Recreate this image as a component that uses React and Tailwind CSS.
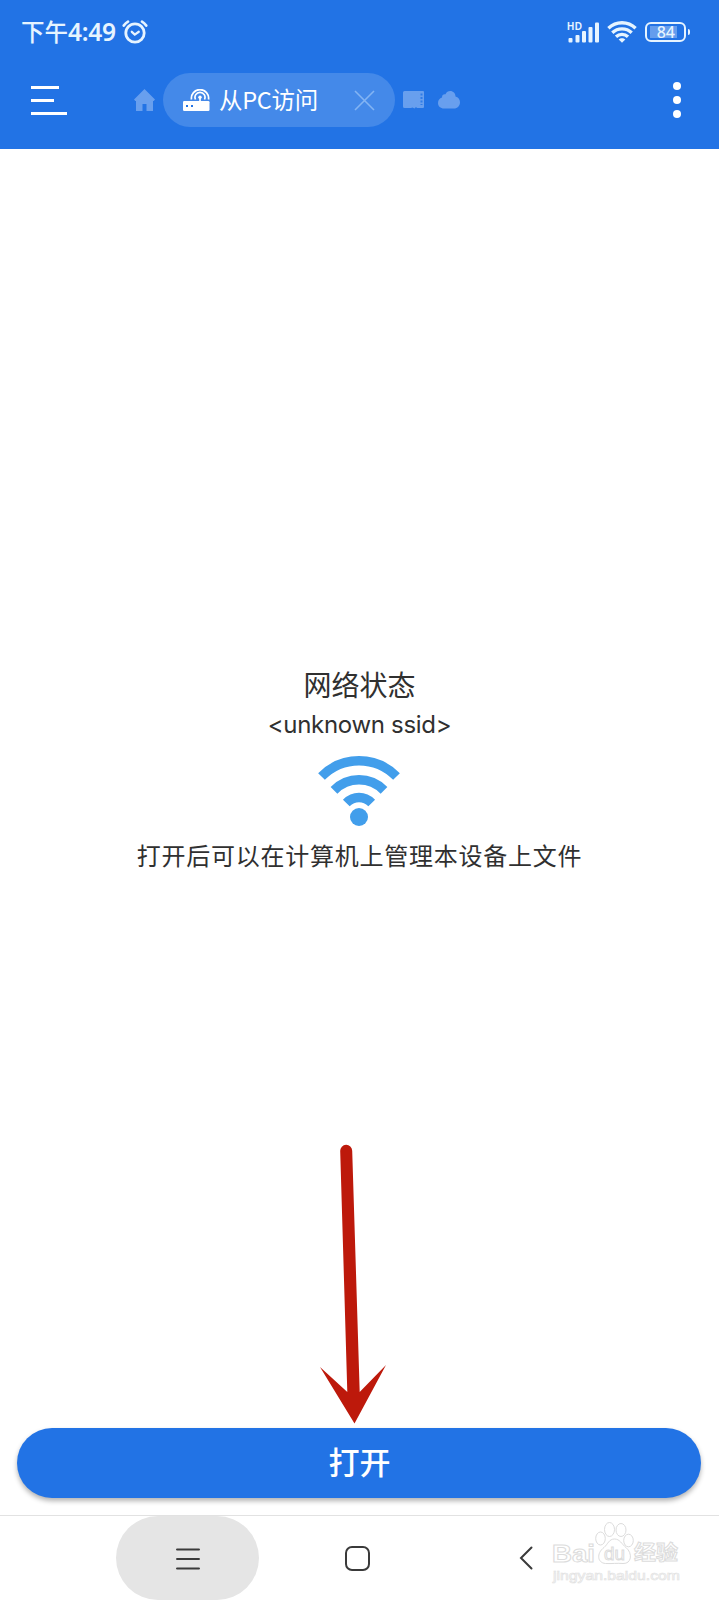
import React from 'react';

const CJK = "font-['Noto_Sans_CJK_SC',sans-serif]";

function AlarmIcon() {
  return (
    <svg width="26" height="24" viewBox="0 0 26 24" fill="none" stroke="currentColor" strokeLinecap="round">
      <circle cx="13" cy="13" r="9.2" strokeWidth="2.8" />
      <path d="M9.8 11.8l3 2.8 4-2.8" strokeWidth="2.3" />
      <path d="M1.8 5.6C2.9 3.9 4.2 2.6 6 1.6M24.2 5.6c-1.1-1.7-2.4-3-4.2-4" strokeWidth="2.7" />
    </svg>
  );
}

function SignalIcon() {
  return (
    <svg width="33" height="22" viewBox="0 0 33 22" fill="currentColor">
      <text x="0" y="8.5" fontSize="10" fontWeight="600" fontFamily="'Liberation Sans', Arial, sans-serif" textLength="15">HD</text>
      <rect x="1.5" y="17" width="4" height="4.5" rx="1" />
      <rect x="8.5" y="14" width="4" height="7.5" rx="1" />
      <rect x="15" y="10" width="4" height="11.5" rx="1" />
      <rect x="21.5" y="6" width="4" height="15.5" rx="1" />
      <rect x="28" y="1.5" width="4" height="20" rx="1" />
    </svg>
  );
}

function StatusWifi() {
  return (
    <svg width="30" height="22" viewBox="0 0 30 22" fill="none" stroke="currentColor" strokeWidth="3.3">
      <path d="M1.4 7.3C9-0.1 21-0.1 28.6 7.3" />
      <path d="M5.3 11.7c5.4-5.2 14-5.2 19.4 0" />
      <path d="M9 15.7c3.4-3.2 8.6-3.2 12 0" />
      <path d="M11.7 18.6c1.8-1.9 4.8-1.9 6.6 0L15 21.8z" fill="currentColor" stroke="none" />
    </svg>
  );
}

function Battery() {
  return (
    <div className="ml-px flex items-center gap-[2px]">
      <div className="flex h-5 w-[41px] items-center rounded-[6px] border-2 border-current pl-[3px]">
        <div className="flex h-[12px] w-[27px] items-center justify-end bg-white/30">
          <span className="pr-[2px] font-['Noto_Sans',sans-serif] text-[16px] leading-none font-medium">84</span>
        </div>
      </div>
      <div className="h-[6px] w-[2px] rounded-r-sm bg-current" />
    </div>
  );
}

function RouterIcon() {
  return (
    <svg width="27" height="22" viewBox="0 0 27 22" fill="none" stroke="currentColor">
      <rect x="0" y="12" width="26.5" height="10" rx="1.2" fill="currentColor" stroke="none" />
      <rect x="3" y="16" width="2" height="2" fill="#2474e5" stroke="none" />
      <rect x="8" y="16" width="2" height="2" fill="#2474e5" stroke="none" />
      <path d="M17 8.5v4" strokeWidth="1.7" />
      <circle cx="17" cy="8.3" r="1.7" fill="currentColor" stroke="none" />
      <path d="M12.5 10.5a5 5 0 1 1 9 0M8.5 10.5a8.6 8.6 0 1 1 17 0" strokeWidth="1.7" />
    </svg>
  );
}

function BigWifi() {
  return (
    <svg className="-ml-[2px]" width="82" height="70" viewBox="0 0 82 70" fill="none" stroke="#429eeb" strokeWidth="9.5">
      <path d="M3.5 20.5C24.5-.5 57.5-.5 78.5 20.5" />
      <path d="M16 34.3c14-14 36-14 50 0" />
      <path d="M28.3 47c7.4-7.4 18-7.4 25.4 0" />
      <circle cx="41" cy="61" r="9" fill="#429eeb" stroke="none" />
    </svg>
  );
}

function Header() {
  return (
    <header className="h-[149px] bg-[#2273e5]">
      <div className="flex h-16 items-center pl-[21px] pr-[29px] text-[#e6f4ff]">
        <span className={`${CJK} text-[23.5px] leading-none font-medium`}>下午</span>
        <span className="mr-[6px] w-[48px] whitespace-nowrap font-['Noto_Sans',sans-serif] text-[24.5px] leading-none font-semibold tracking-[-0.3px]">4:49</span>
        <AlarmIcon />
        <div className="ml-auto flex items-center gap-[7px]">
          <SignalIcon />
          <StatusWifi />
          <Battery />
        </div>
      </div>

      <div className="flex h-[72px] items-center pl-[31px] text-white">
        <div className="mr-[67px] flex w-9 flex-col gap-[10px] pt-px">
          <div className="h-[3px] w-[28px] bg-white" />
          <div className="h-[3px] w-[23px] bg-white" />
          <div className="h-[3px] w-9 bg-white" />
        </div>
        <svg className="mr-[8px] shrink-0 text-[#689fee]" width="21" height="22" viewBox="0 0 21 22" fill="currentColor">
          <path d="M10.5 0L21 10.5l-1.3 1.5H19v10h-6.5v-7h-4v7H2V12h-.7L0 10.5 10.5 0z" />
        </svg>
        <div className="flex h-[54px] w-[232px] items-center rounded-full bg-[#4489e9] px-5">
          <RouterIcon />
          <span className={`${CJK} ml-[9px] text-[23.5px] leading-none tracking-[-0.3px] whitespace-nowrap`}>从PC访问</span>
          <svg className="ml-auto text-[#83b4f3]" width="21" height="21" viewBox="0 0 21 21" fill="none" stroke="currentColor" strokeWidth="1.6">
            <path d="M1 1l19 19M20 1L1 20" />
          </svg>
        </div>
        <svg className="ml-[8px] text-[#689fee]" width="21" height="18" viewBox="0 0 21 18" fill="currentColor">
          <path d="M1.500 0H20a1 1 0 0 1 1 1v15a1 1 0 0 1-1 1h-6l-1-1-1.500 1.500-2-1L8 17H1.500A1.500 1.500 0 0 1 0 15.500v-14A1.500 1.500 0 0 1 1.500 0z" />
          <path d="M18.500 2.500V14" stroke="#2f7ce7" strokeWidth="2" strokeDasharray="2 1.500" />
        </svg>
        <svg className="ml-[14px] text-[#689fee]" width="22" height="18" viewBox="0 0 22 18" fill="currentColor">
          <path d="M6 17.5c-3.5 0-6-2.300-6-5.500 0-2.700 1.700-4.800 4-5.500C4 3.800 5.500 3 7.500 3.300 8.500 1 10 0 12.200 0c3 0 5.300 2.300 5.300 5.500 2.700.7 4.500 3 4.500 5.700 0 3.600-2.600 6.300-6 6.300z" />
        </svg>
        <div className="ml-auto mr-[38px] flex flex-col gap-[6px]">
          <div className="size-2 rounded-full bg-white" />
          <div className="size-2 rounded-full bg-white" />
          <div className="size-2 rounded-full bg-white" />
        </div>
      </div>
    </header>
  );
}

function NetworkStatus() {
  return (
    <div className="flex flex-col items-center pt-[515px] text-[#303030]">
      <p className={`${CJK} h-10 text-[28px] leading-10`}>网络状态</p>
      <p className="mt-px mb-[12px] h-[39px] font-['Inter',sans-serif] text-[24px] leading-[39px] tracking-[-0.3px]">&lt;unknown ssid&gt;</p>
      <BigWifi />
      <p className={`${CJK} mt-[9px] h-10 text-[24px] leading-10 tracking-[0.75px]`}>打开后可以在计算机上管理本设备上文件</p>
    </div>
  );
}

function Pointer() {
  return (
    <svg className="absolute top-[1130px] left-[300px]" width="110" height="300" viewBox="0 0 110 300" fill="#bd190b">
      <path d="M40.2 21a6 6 0 0 1 12-.3L59.7 262 86 235 54.5 293.5 20 237 47.3 262z" />
    </svg>
  );
}

function Watermark() {
  return (
    <svg className="absolute right-[36px] bottom-[14px]" width="134" height="66" viewBox="0 0 134 66" fill="#fff" stroke="#dcdcdc" strokeWidth="1">
      <ellipse cx="60.5" cy="9.500" rx="5" ry="7" />
      <ellipse cx="72" cy="10" rx="5" ry="6.500" />
      <ellipse cx="51.500" cy="18.500" rx="4.800" ry="6.500" />
      <ellipse cx="79.500" cy="20.500" rx="4.800" ry="6.300" />
      <path d="M65.5 19c-5.500 0-6.500 5-10.500 8.500-8 6-6.500 15.500 1.500 16 6 .3 12-.5 17.500 0 8.500.5 10-10 3-16-4.500-3.500-6-8.500-11.500-8.500z" />
      <g fontFamily="'Liberation Sans', Arial, sans-serif" fontWeight="700">
        <text x="3" y="41.500" fontSize="24" textLength="43" lengthAdjust="spacingAndGlyphs">Bai</text>
        <text x="55" y="40" fontSize="19" fontWeight="400" textLength="21" lengthAdjust="spacingAndGlyphs">du</text>
        <text x="85" y="40" fontSize="20.500" fontFamily="'Noto Sans CJK SC', sans-serif" textLength="44" lengthAdjust="spacingAndGlyphs">经验</text>
        <text x="4" y="59.500" fontSize="13.500" stroke="#e2e2e2" strokeWidth="0.700" fontWeight="400" textLength="127" lengthAdjust="spacingAndGlyphs">jingyan.baidu.com</text>
      </g>
    </svg>
  );
}

function NavBar() {
  return (
    <nav className="flex h-[85px] items-center border-t border-[#e2e2e2] pl-[116px] text-[#3a3a3a]">
      <div className="flex h-[84px] w-[143px] items-center justify-center rounded-full bg-[#e5e5e5]">
        <svg className="mt-px" width="24" height="22" viewBox="0 0 24 22" stroke="currentColor" strokeWidth="2.2" strokeLinecap="round">
          <path d="M1.1 1.5h21.8M1.1 11h21.8M1.1 20.5h21.8" />
        </svg>
      </div>
      <div className="ml-[86px] size-[25px] rounded-[7px] border-2 border-current" />
      <svg className="ml-[149px]" width="14" height="24" viewBox="0 0 14 24" fill="none" stroke="currentColor" strokeWidth="2" strokeLinecap="round">
        <path d="M12.5 1.5L2 12l10.5 10.5" />
      </svg>
    </nav>
  );
}

export default function App() {
  return (
    <div className="relative flex h-[1600px] w-[719px] flex-col overflow-hidden bg-white">
      <Header />
      <main className="flex flex-1 flex-col">
        <NetworkStatus />
        <button className={`${CJK} mr-[18px] ml-[17px] mt-auto mb-[17px] h-[70px] rounded-full bg-[#2273e5] pb-[5px] pl-px text-[31px] leading-none font-medium text-white shadow-[0_3px_5px_rgba(0,0,0,0.3)]`}>
          打开
        </button>
      </main>
      <NavBar />
      <Pointer />
      <Watermark />
    </div>
  );
}
